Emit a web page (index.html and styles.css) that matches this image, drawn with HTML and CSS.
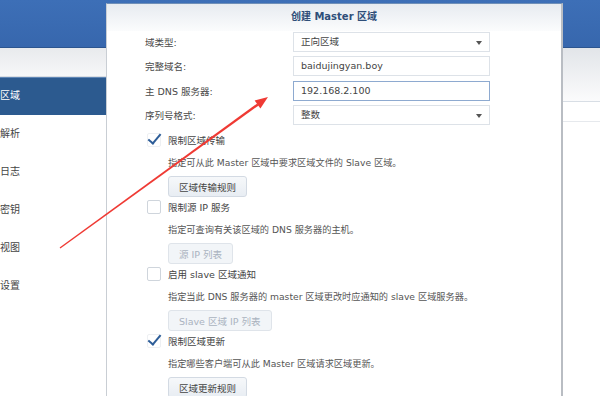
FILE: index.html
```html
<!DOCTYPE html>
<html lang="zh-CN">
<head>
    <meta charset="UTF-8">
    <meta name="viewport" content="width=device-width, initial-scale=1.0">
    <title>DNS Server - 创建 Master 区域</title>
    <link rel="stylesheet" href="styles.css">
</head>
<body>

<div class="app">
    <header class="topbar"></header>
    <div class="workspace">
        <aside class="sidebar">
            <div class="side-toolbar"></div>
            <ul class="nav">
                <li class="active">区域</li>
                <li>解析</li>
                <li>日志</li>
                <li>密钥</li>
                <li>视图</li>
                <li>设置</li>
            </ul>
        </aside>
        <main class="content">
            <div class="toolbar"></div>
            <div class="grid-head"></div>
        </main>
    </div>
</div>

<!-- 对话框 -->
<div class="dialog">
    <div class="dialog-header">创建 Master 区域</div>
    <form class="dialog-body">
        <div class="form-row">
            <label>域类型:</label>
            <div class="field select">正向区域<span class="caret"></span></div>
        </div>
        <div class="form-row">
            <label>完整域名:</label>
            <div class="field">baidujingyan.boy</div>
        </div>
        <div class="form-row">
            <label>主 DNS 服务器:</label>
            <div class="field focused">192.168.2.100</div>
        </div>
        <div class="form-row">
            <label>序列号格式:</label>
            <div class="field select">整数<span class="caret"></span></div>
        </div>

        <div class="options">
            <div class="option">
                <div class="check-row"><span class="checkbox checked"></span>限制区域传输</div>
                <p class="desc">指定可从此 Master 区域中要求区域文件的 Slave 区域。</p>
                <button type="button" class="btn">区域传输规则</button>
            </div>
            <div class="option">
                <div class="check-row"><span class="checkbox"></span>限制源 IP 服务</div>
                <p class="desc">指定可查询有关该区域的 DNS 服务器的主机。</p>
                <button type="button" class="btn" disabled>源 IP 列表</button>
            </div>
            <div class="option">
                <div class="check-row"><span class="checkbox"></span>启用 slave 区域通知</div>
                <p class="desc">指定当此 DNS 服务器的 master 区域更改时应通知的 slave 区域服务器。</p>
                <button type="button" class="btn" disabled>Slave 区域 IP 列表</button>
            </div>
            <div class="option">
                <div class="check-row"><span class="checkbox checked"></span>限制区域更新</div>
                <p class="desc">指定哪些客户端可从此 Master 区域请求区域更新。</p>
                <button type="button" class="btn">区域更新规则</button>
            </div>
        </div>
    </form>
</div>

<!-- 红色标注箭头 -->
<svg class="arrow" width="600" height="396" viewBox="0 0 600 396">
    <polygon points="60.4,248.6 59.6,247.4 257.3,103.4 258.7,105.4" fill="#ef3a34"/>
    <polygon points="268,97 260.4,108.4 254.6,100.6" fill="#ef3a34"/>
</svg>

</body>
</html>
```

FILE: styles.css
```css
* {
    box-sizing: border-box;
}
body {
    margin: 0;
    width: 600px;
    height: 396px;
    overflow: hidden;
    font-family: "DejaVu Sans", "Noto Sans CJK SC", sans-serif;
    font-size: 9.5px;
    color: #444;
    background-color: #fff;
}
.app {
    display: flex;
    flex-direction: column;
    height: 396px;
}
.topbar {
    height: 48px;
    background: linear-gradient(to bottom, #3d6fb7, #3767ad);
    border-bottom: 1px solid #2c558f;
}
.workspace {
    display: flex;
    flex: 1;
}
.sidebar {
    width: 107px;
    background-color: #fff;
}
.side-toolbar {
    height: 29px;
    background: linear-gradient(to bottom, #e8eaed, #f6f7f8);
    border-bottom: 1px solid #d9dde2;
}
.nav {
    list-style: none;
    margin: 0;
    padding: 0;
}
.nav li {
    height: 38px;
    line-height: 38px;
    font-size: 10px;
    color: #444;
}
.nav li.active {
    background-color: #2c5a8f;
    border-top: 1px solid #5f86b5;
    line-height: 36px;
    color: #fff;
}
.content {
    flex: 1;
}
.toolbar {
    height: 54px;
    background: linear-gradient(to bottom, #e2e5e9, #fbfbfc);
    border-bottom: 1px solid #d8dee5;
}
.grid-head {
    height: 20px;
    border-bottom: 1px solid #e6e9ed;
}

/* 对话框 */
.dialog {
    position: absolute;
    left: 106px;
    top: 3px;
    width: 457px;
    height: 393px;
    overflow: hidden;
    background-color: #fff;
    border: 1px solid #c9ced4;
    border-top-color: #6f8fb8;
    border-right: 2px solid #b9bdc3;
    border-bottom: none;
}
.dialog-header {
    height: 27px;
    line-height: 26px;
    text-align: center;
    font-size: 10px;
    font-weight: bold;
    color: #2e4e79;
    background: linear-gradient(to bottom, #e7ebf0, #fbfcfd);
}
.dialog-body {
    padding: 1px 0 0 38px;
}
.form-row {
    display: flex;
    align-items: center;
    height: 20px;
    margin-bottom: 4.4px;
}
.form-row label {
    width: 148px;
    color: #4a4a4a;
}
.field {
    position: relative;
    width: 197px;
    height: 20px;
    line-height: 18px;
    padding-left: 7px;
    border: 1px solid #dde2e8;
    color: #444;
}
.field.focused {
    border-color: #8eaad0;
}
.caret {
    position: absolute;
    right: 7px;
    top: 8px;
    border-left: 3.5px solid transparent;
    border-right: 3.5px solid transparent;
    border-top: 4px solid #555;
}
.options {
    margin-top: 8px;
}
.option {
    margin-bottom: 3px;
}
.check-row {
    display: flex;
    align-items: center;
    height: 14px;
    margin-left: 2px;
    gap: 7px;
    color: #444;
}
.checkbox {
    position: relative;
    width: 14px;
    height: 14px;
    border: 1px solid #cfd5dc;
    border-radius: 2px;
    background-color: #fff;
}
.checkbox.checked {
    border-color: #eef0f3;
}
.checkbox.checked::after {
    content: "";
    position: absolute;
    left: 3px;
    top: -3px;
    width: 5px;
    height: 11px;
    border-right: 2.5px solid #2d5d98;
    border-bottom: 2.5px solid #2d5d98;
    transform: rotate(40deg);
}
.desc {
    margin: 8px 0 0 23px;
    line-height: 15px;
    font-size: 9.2px;
    color: #555;
}
.btn {
    display: block;
    margin: 6px 0 0 23px;
    height: 21px;
    padding: 0 10px;
    font-family: inherit;
    font-size: 9.5px;
    color: #444;
    background: linear-gradient(to bottom, #f6f8fa, #e8edf3);
    border: 1px solid #d3dae3;
    border-radius: 3px;
}
.btn:disabled {
    color: #aab3bf;
    background: #f2f5f8;
    border-color: #dfe4ea;
}
.arrow {
    position: absolute;
    left: 0;
    top: 0;
    pointer-events: none;
}
```
